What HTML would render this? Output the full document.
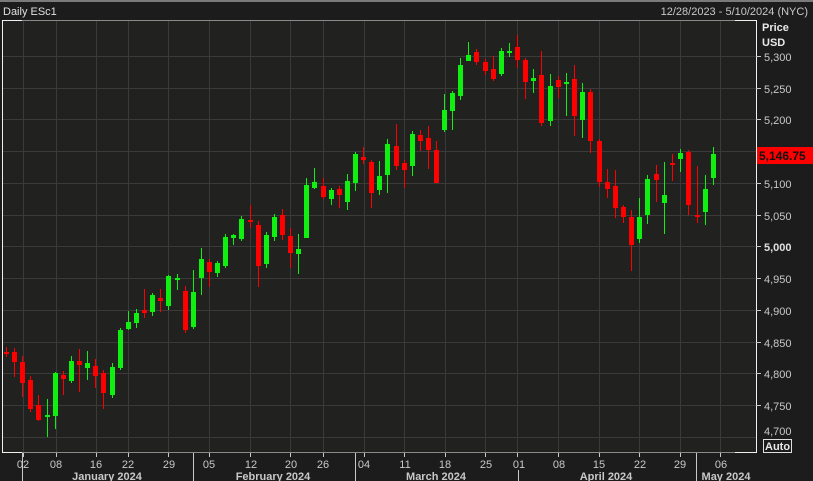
<!DOCTYPE html>
<html><head><meta charset="utf-8"><style>
html,body{margin:0;padding:0;background:#1c1c1c;width:813px;height:481px;overflow:hidden}
svg{display:block}
text{font-family:"Liberation Sans",sans-serif;font-size:11px;fill:#c8c8c8}
</style></head><body>
<svg width="813" height="481" xmlns="http://www.w3.org/2000/svg">
<rect x="0" y="0" width="813" height="481" fill="#1c1c1c"/>
<rect x="0" y="0" width="813" height="2" fill="#7a7a7a"/>
<text x="3" y="15" style="fill:#e0e0e0">Daily ESc1</text>
<text x="808" y="15" text-anchor="end">12/28/2023 - 5/10/2024 (NYC)</text>
<rect x="2" y="20" width="754" height="433" fill="#212220"/>
<g stroke="#3a3a3a" stroke-width="1">
<line x1="2" y1="56.5" x2="756" y2="56.5"/><line x1="2" y1="88.5" x2="756" y2="88.5"/><line x1="2" y1="119.5" x2="756" y2="119.5"/><line x1="2" y1="151.5" x2="756" y2="151.5"/><line x1="2" y1="183.5" x2="756" y2="183.5"/><line x1="2" y1="215.5" x2="756" y2="215.5"/><line x1="2" y1="246.5" x2="756" y2="246.5"/><line x1="2" y1="278.5" x2="756" y2="278.5"/><line x1="2" y1="310.5" x2="756" y2="310.5"/><line x1="2" y1="342.5" x2="756" y2="342.5"/><line x1="2" y1="373.5" x2="756" y2="373.5"/><line x1="2" y1="405.5" x2="756" y2="405.5"/><line x1="2" y1="437.5" x2="756" y2="437.5"/>
<line x1="23.5" y1="20" x2="23.5" y2="453"/><line x1="56.5" y1="20" x2="56.5" y2="453"/><line x1="96.5" y1="20" x2="96.5" y2="453"/><line x1="128.5" y1="20" x2="128.5" y2="453"/><line x1="168.5" y1="20" x2="168.5" y2="453"/><line x1="209.5" y1="20" x2="209.5" y2="453"/><line x1="250.5" y1="20" x2="250.5" y2="453"/><line x1="290.5" y1="20" x2="290.5" y2="453"/><line x1="323.5" y1="20" x2="323.5" y2="453"/><line x1="364.5" y1="20" x2="364.5" y2="453"/><line x1="404.5" y1="20" x2="404.5" y2="453"/><line x1="445.5" y1="20" x2="445.5" y2="453"/><line x1="485.5" y1="20" x2="485.5" y2="453"/><line x1="517.5" y1="20" x2="517.5" y2="453"/><line x1="558.5" y1="20" x2="558.5" y2="453"/><line x1="599.5" y1="20" x2="599.5" y2="453"/><line x1="639.5" y1="20" x2="639.5" y2="453"/><line x1="680.5" y1="20" x2="680.5" y2="453"/><line x1="720.5" y1="20" x2="720.5" y2="453"/>
</g>
<g stroke="#8a8a8a"><line x1="2" y1="20.5" x2="756" y2="20.5"/><line x1="2" y1="452.5" x2="756" y2="452.5"/></g>
<g stroke="#f0f0f0" stroke-width="1">
<line x1="2.5" y1="20" x2="2.5" y2="453"/><line x1="2" y1="20.5" x2="22" y2="20.5"/><line x1="735" y1="20.5" x2="756" y2="20.5"/>
<line x1="2" y1="452.5" x2="22" y2="452.5"/><line x1="735" y1="452.5" x2="756" y2="452.5"/>
<line x1="756.5" y1="20" x2="756.5" y2="453"/>
</g>
<g fill="#ff0000">
<rect x="6" y="347" width="1" height="10"/><rect x="4" y="352" width="5" height="2"/>
<rect x="14" y="348" width="1" height="29"/><rect x="12" y="352" width="5" height="10"/>
<rect x="22" y="356" width="1" height="41"/><rect x="20" y="362" width="5" height="21"/>
<rect x="30" y="376" width="1" height="36"/><rect x="28" y="380" width="5" height="29"/>
<rect x="38" y="395" width="1" height="26"/><rect x="36" y="405" width="5" height="15"/>
<rect x="63" y="371" width="1" height="24"/><rect x="61" y="375" width="5" height="4"/>
<rect x="79" y="349" width="1" height="43"/><rect x="77" y="361" width="5" height="4"/>
<rect x="95" y="359" width="1" height="29"/><rect x="93" y="366" width="5" height="10"/>
<rect x="103" y="370" width="1" height="39"/><rect x="101" y="373" width="5" height="20"/>
<rect x="144" y="289" width="1" height="29"/><rect x="142" y="310" width="5" height="3"/>
<rect x="160" y="289" width="1" height="23"/><rect x="158" y="298" width="5" height="3"/>
<rect x="185" y="286" width="1" height="47"/><rect x="183" y="291" width="5" height="39"/>
<rect x="209" y="259" width="1" height="28"/><rect x="207" y="262" width="5" height="10"/>
<rect x="250" y="205" width="1" height="23"/><rect x="248" y="220" width="5" height="2"/>
<rect x="258" y="221" width="1" height="66"/><rect x="256" y="225" width="5" height="41"/>
<rect x="282" y="209" width="1" height="31"/><rect x="280" y="215" width="5" height="20"/>
<rect x="290" y="228" width="1" height="40"/><rect x="288" y="236" width="5" height="17"/>
<rect x="323" y="178" width="1" height="21"/><rect x="321" y="186" width="5" height="11"/>
<rect x="339" y="186" width="1" height="22"/><rect x="337" y="189" width="5" height="6"/>
<rect x="363" y="147" width="1" height="17"/><rect x="361" y="157" width="5" height="3"/>
<rect x="371" y="160" width="1" height="48"/><rect x="369" y="162" width="5" height="31"/>
<rect x="396" y="124" width="1" height="46"/><rect x="394" y="146" width="5" height="20"/>
<rect x="404" y="160" width="1" height="28"/><rect x="402" y="163" width="5" height="7"/>
<rect x="420" y="130" width="1" height="21"/><rect x="418" y="135" width="5" height="6"/>
<rect x="428" y="126" width="1" height="43"/><rect x="426" y="138" width="5" height="12"/>
<rect x="436" y="141" width="1" height="42"/><rect x="434" y="150" width="5" height="33"/>
<rect x="476" y="49" width="1" height="16"/><rect x="474" y="52" width="5" height="10"/>
<rect x="485" y="59" width="1" height="16"/><rect x="483" y="62" width="5" height="9"/>
<rect x="493" y="56" width="1" height="25"/><rect x="491" y="69" width="5" height="10"/>
<rect x="517" y="35" width="1" height="33"/><rect x="515" y="47" width="5" height="13"/>
<rect x="525" y="58" width="1" height="41"/><rect x="523" y="60" width="5" height="22"/>
<rect x="541" y="51" width="1" height="75"/><rect x="539" y="75" width="5" height="48"/>
<rect x="558" y="76" width="1" height="22"/><rect x="556" y="80" width="5" height="7"/>
<rect x="574" y="65" width="1" height="71"/><rect x="572" y="79" width="5" height="37"/>
<rect x="590" y="89" width="1" height="64"/><rect x="588" y="92" width="5" height="49"/>
<rect x="599" y="139" width="1" height="48"/><rect x="597" y="141" width="5" height="41"/>
<rect x="607" y="169" width="1" height="29"/><rect x="605" y="182" width="5" height="7"/>
<rect x="615" y="170" width="1" height="48"/><rect x="613" y="186" width="5" height="22"/>
<rect x="623" y="205" width="1" height="18"/><rect x="621" y="207" width="5" height="10"/>
<rect x="631" y="210" width="1" height="61"/><rect x="629" y="217" width="5" height="28"/>
<rect x="656" y="165" width="1" height="37"/><rect x="654" y="174" width="5" height="6"/>
<rect x="672" y="154" width="1" height="27"/><rect x="670" y="163" width="5" height="2"/>
<rect x="688" y="150" width="1" height="65"/><rect x="686" y="152" width="5" height="53"/>
<rect x="697" y="166" width="1" height="57"/><rect x="695" y="215" width="5" height="2"/>
</g>
<g fill="#10f010">
<rect x="47" y="399" width="1" height="38"/><rect x="45" y="415" width="5" height="2"/>
<rect x="55" y="372" width="1" height="57"/><rect x="53" y="373" width="5" height="43"/>
<rect x="71" y="356" width="1" height="27"/><rect x="69" y="361" width="5" height="20"/>
<rect x="87" y="351" width="1" height="29"/><rect x="85" y="363" width="5" height="5"/>
<rect x="112" y="363" width="1" height="35"/><rect x="110" y="367" width="5" height="28"/>
<rect x="120" y="328" width="1" height="42"/><rect x="118" y="330" width="5" height="38"/>
<rect x="128" y="311" width="1" height="19"/><rect x="126" y="322" width="5" height="7"/>
<rect x="136" y="309" width="1" height="19"/><rect x="134" y="313" width="5" height="10"/>
<rect x="152" y="293" width="1" height="23"/><rect x="150" y="295" width="5" height="17"/>
<rect x="168" y="275" width="1" height="35"/><rect x="166" y="276" width="5" height="30"/>
<rect x="177" y="274" width="1" height="16"/><rect x="175" y="278" width="5" height="2"/>
<rect x="193" y="270" width="1" height="59"/><rect x="191" y="292" width="5" height="35"/>
<rect x="201" y="248" width="1" height="47"/><rect x="199" y="259" width="5" height="19"/>
<rect x="217" y="261" width="1" height="16"/><rect x="215" y="263" width="5" height="10"/>
<rect x="225" y="234" width="1" height="34"/><rect x="223" y="237" width="5" height="29"/>
<rect x="233" y="234" width="1" height="11"/><rect x="231" y="235" width="5" height="3"/>
<rect x="241" y="216" width="1" height="25"/><rect x="239" y="219" width="5" height="20"/>
<rect x="266" y="232" width="1" height="36"/><rect x="264" y="235" width="5" height="29"/>
<rect x="274" y="214" width="1" height="27"/><rect x="272" y="217" width="5" height="20"/>
<rect x="298" y="234" width="1" height="40"/><rect x="296" y="249" width="5" height="5"/>
<rect x="306" y="178" width="1" height="60"/><rect x="304" y="185" width="5" height="53"/>
<rect x="314" y="168" width="1" height="21"/><rect x="312" y="182" width="5" height="6"/>
<rect x="331" y="188" width="1" height="17"/><rect x="329" y="190" width="5" height="9"/>
<rect x="347" y="174" width="1" height="36"/><rect x="345" y="181" width="5" height="21"/>
<rect x="355" y="152" width="1" height="39"/><rect x="353" y="154" width="5" height="29"/>
<rect x="379" y="161" width="1" height="34"/><rect x="377" y="176" width="5" height="14"/>
<rect x="387" y="139" width="1" height="54"/><rect x="385" y="144" width="5" height="31"/>
<rect x="412" y="131" width="1" height="45"/><rect x="410" y="134" width="5" height="32"/>
<rect x="444" y="94" width="1" height="38"/><rect x="442" y="110" width="5" height="20"/>
<rect x="452" y="91" width="1" height="39"/><rect x="450" y="93" width="5" height="18"/>
<rect x="460" y="58" width="1" height="42"/><rect x="458" y="65" width="5" height="31"/>
<rect x="468" y="42" width="1" height="19"/><rect x="466" y="55" width="5" height="6"/>
<rect x="501" y="48" width="1" height="28"/><rect x="499" y="51" width="5" height="23"/>
<rect x="509" y="43" width="1" height="14"/><rect x="507" y="51" width="5" height="2"/>
<rect x="533" y="69" width="1" height="24"/><rect x="531" y="78" width="5" height="3"/>
<rect x="550" y="74" width="1" height="52"/><rect x="548" y="86" width="5" height="35"/>
<rect x="566" y="73" width="1" height="43"/><rect x="564" y="82" width="5" height="2"/>
<rect x="582" y="83" width="1" height="55"/><rect x="580" y="92" width="5" height="28"/>
<rect x="639" y="198" width="1" height="45"/><rect x="637" y="217" width="5" height="22"/>
<rect x="647" y="175" width="1" height="49"/><rect x="645" y="179" width="5" height="36"/>
<rect x="664" y="162" width="1" height="72"/><rect x="662" y="195" width="5" height="8"/>
<rect x="680" y="149" width="1" height="23"/><rect x="678" y="153" width="5" height="6"/>
<rect x="705" y="175" width="1" height="50"/><rect x="703" y="189" width="5" height="23"/>
<rect x="713" y="147" width="1" height="38"/><rect x="711" y="154" width="5" height="24"/>
</g>
<g stroke="#c8c8c8"><line x1="756" y1="56.5" x2="761" y2="56.5"/><line x1="756" y1="88.5" x2="761" y2="88.5"/><line x1="756" y1="119.5" x2="761" y2="119.5"/><line x1="756" y1="183.5" x2="761" y2="183.5"/><line x1="756" y1="215.5" x2="761" y2="215.5"/><line x1="756" y1="246.5" x2="761" y2="246.5"/><line x1="756" y1="278.5" x2="761" y2="278.5"/><line x1="756" y1="310.5" x2="761" y2="310.5"/><line x1="756" y1="342.5" x2="761" y2="342.5"/><line x1="756" y1="373.5" x2="761" y2="373.5"/><line x1="756" y1="405.5" x2="761" y2="405.5"/></g>
<text x="762" y="31" style="fill:#e8e8e8;font-weight:bold">Price</text>
<text x="762" y="46" style="fill:#e8e8e8;font-weight:bold">USD</text>
<text x="764" y="61">5,300</text>
<text x="764" y="93">5,250</text>
<text x="764" y="124">5,200</text>
<text x="764" y="188">5,100</text>
<text x="764" y="220">5,050</text>
<text x="764" y="251" style="font-weight:bold;fill:#e0e0e0">5,000</text>
<text x="764" y="283">4,950</text>
<text x="764" y="315">4,900</text>
<text x="764" y="347">4,850</text>
<text x="764" y="378">4,800</text>
<text x="764" y="410">4,750</text>
<text x="764" y="435">4,700</text>
<rect x="757" y="147" width="56" height="17" fill="#ff0000"/>
<text x="759" y="160" style="fill:#111;font-weight:bold;font-size:12px">5,146.75</text>
<rect x="763.5" y="439.5" width="28" height="13" fill="#1c1c1c" stroke="#e0e0e0"/>
<text x="765" y="450" style="fill:#e8e8e8;font-weight:bold">Auto</text>
<g stroke="#c8c8c8"><line x1="23.5" y1="453" x2="23.5" y2="457"/><line x1="56.5" y1="453" x2="56.5" y2="457"/><line x1="96.5" y1="453" x2="96.5" y2="457"/><line x1="128.5" y1="453" x2="128.5" y2="457"/><line x1="168.5" y1="453" x2="168.5" y2="457"/><line x1="209.5" y1="453" x2="209.5" y2="457"/><line x1="250.5" y1="453" x2="250.5" y2="457"/><line x1="290.5" y1="453" x2="290.5" y2="457"/><line x1="323.5" y1="453" x2="323.5" y2="457"/><line x1="364.5" y1="453" x2="364.5" y2="457"/><line x1="404.5" y1="453" x2="404.5" y2="457"/><line x1="445.5" y1="453" x2="445.5" y2="457"/><line x1="485.5" y1="453" x2="485.5" y2="457"/><line x1="517.5" y1="453" x2="517.5" y2="457"/><line x1="558.5" y1="453" x2="558.5" y2="457"/><line x1="599.5" y1="453" x2="599.5" y2="457"/><line x1="639.5" y1="453" x2="639.5" y2="457"/><line x1="680.5" y1="453" x2="680.5" y2="457"/><line x1="720.5" y1="453" x2="720.5" y2="457"/>
<line x1="22.5" y1="453" x2="22.5" y2="481"/><line x1="193.5" y1="453" x2="193.5" y2="481"/><line x1="355.5" y1="453" x2="355.5" y2="481"/><line x1="518.5" y1="470" x2="518.5" y2="481"/><line x1="696.5" y1="453" x2="696.5" y2="481"/></g>
<g text-anchor="middle">
<text x="23" y="468">02</text><text x="56" y="468">08</text><text x="96" y="468">16</text><text x="128" y="468">22</text><text x="169" y="468">29</text><text x="209" y="468">05</text><text x="251" y="468">12</text><text x="291" y="468">20</text><text x="323" y="468">26</text><text x="364" y="468">04</text><text x="405" y="468">11</text><text x="445" y="468">18</text><text x="486" y="468">25</text><text x="519" y="468">01</text><text x="559" y="468">08</text><text x="599" y="468">15</text><text x="640" y="468">22</text><text x="680" y="468">29</text><text x="721" y="468">06</text>
<text x="107" y="480" style="font-weight:bold">January 2024</text>
<text x="273" y="480" style="font-weight:bold">February 2024</text>
<text x="436" y="480" style="font-weight:bold">March 2024</text>
<text x="606" y="480" style="font-weight:bold">April 2024</text>
<text x="726" y="480" style="font-weight:bold">May 2024</text>
</g>
</svg>
</body></html>
